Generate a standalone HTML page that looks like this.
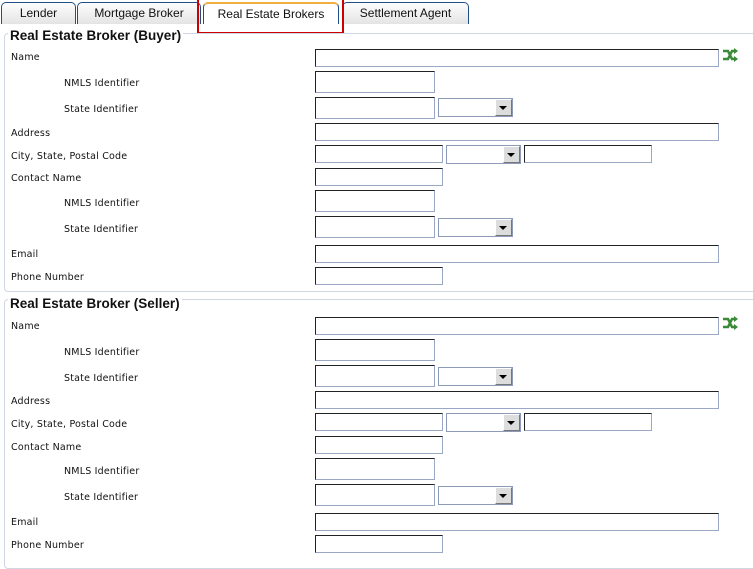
<!DOCTYPE html>
<html><head><meta charset="utf-8"><style>
body{margin:0;width:753px;height:553px;background:#fff;position:relative;overflow:hidden;font-family:"DejaVu Sans",sans-serif;}
.a{position:absolute}
.tab{position:absolute;top:2px;height:22px;background:linear-gradient(#fdfdfd,#e4e4e4);border:1px solid #1f4f86;border-bottom:none;border-radius:5px 5px 0 0;font:12px "Liberation Sans",sans-serif;color:#111;text-align:center;line-height:21px;box-sizing:border-box}
.fs{position:absolute;left:4px;width:760px;border:1px solid #d0d7e2;border-radius:4px;box-sizing:border-box}
.lg{position:absolute;left:8px;background:#fff;padding:0 2px;font:bold 13.5px "Liberation Sans",sans-serif;color:#111}
.l{position:absolute;font-size:9.5px;color:#111;letter-spacing:.2px;line-height:12px;margin-top:2px}
.i{position:absolute;box-sizing:border-box;border:1px solid #9aa8c6;border-top-color:#222;border-left-color:#222;background:#fff}
.s{position:absolute;box-sizing:border-box;border:1px solid #8e9bb8;background:#fff;height:19px;width:75px}
.s::after{content:"";position:absolute;right:0;top:0;width:17px;height:17px;background:#ddd;box-sizing:border-box;border:1px solid #777;border-top-color:#fff;border-left-color:#fff}
.s::before{content:"";position:absolute;right:5px;top:7px;border:4px solid transparent;border-top:4px solid #000;z-index:2}
</style></head><body>
<div class="tab" style="left:1px;width:75px">Lender</div>
<div class="tab" style="left:77px;width:124px">Mortgage Broker</div>
<div class="tab" style="left:203px;width:136px;background:#fff;border-top:2px solid #f0b040">Real Estate Brokers</div>
<div class="tab" style="left:342px;width:127px">Settlement Agent</div>
<div class="a" style="left:197px;top:0;width:147px;height:34px;border:2px solid #c00;border-top:none;box-sizing:border-box"></div>

<div class="fs" style="top:33px;height:259px"></div>
<div class="lg" style="top:28px">Real Estate Broker (Buyer)</div>
<div class="fs" style="top:299px;height:270px"></div>
<div class="lg" style="top:296px">Real Estate Broker (Seller)</div>

<div class="l" style="left:11px;top:50px">Name</div>
<div class="l" style="left:64px;top:76px">NMLS Identifier</div>
<div class="l" style="left:64px;top:102px">State Identifier</div>
<div class="l" style="left:11px;top:126px">Address</div>
<div class="l" style="left:11px;top:149px">City, State, Postal Code</div>
<div class="l" style="left:11px;top:171px">Contact Name</div>
<div class="l" style="left:64px;top:196px">NMLS Identifier</div>
<div class="l" style="left:64px;top:222px">State Identifier</div>
<div class="l" style="left:11px;top:247px">Email</div>
<div class="l" style="left:11px;top:270px">Phone Number</div>
<div class="i" style="left:315px;top:49px;width:404px;height:18px"></div>
<div class="i" style="left:315px;top:71px;width:120px;height:22px"></div>
<div class="i" style="left:315px;top:97px;width:120px;height:22px"></div>
<div class="s" style="left:438px;top:98px"></div>
<div class="i" style="left:315px;top:123px;width:404px;height:18px"></div>
<div class="i" style="left:315px;top:145px;width:128px;height:18px"></div>
<div class="s" style="left:446px;top:145px"></div>
<div class="i" style="left:524px;top:145px;width:128px;height:18px"></div>
<div class="i" style="left:315px;top:168px;width:128px;height:18px"></div>
<div class="i" style="left:315px;top:190px;width:120px;height:22px"></div>
<div class="i" style="left:315px;top:216px;width:120px;height:22px"></div>
<div class="s" style="left:438px;top:218px"></div>
<div class="i" style="left:315px;top:245px;width:404px;height:18px"></div>
<div class="i" style="left:315px;top:267px;width:128px;height:18px"></div>
<svg class="a" style="left:722px;top:48px" width="16" height="14" viewBox="0 0 16 14"><path d="M1 3h5l4 8h3M1 11h5l4-8h3" stroke="#3a8a3a" stroke-width="2.5" fill="none"/><path d="M12 0l4 3-4 3zM12 8l4 3-4 3z" fill="#3a8a3a"/></svg>

<div class="l" style="left:11px;top:319px">Name</div>
<div class="l" style="left:64px;top:345px">NMLS Identifier</div>
<div class="l" style="left:64px;top:371px">State Identifier</div>
<div class="l" style="left:11px;top:394px">Address</div>
<div class="l" style="left:11px;top:417px">City, State, Postal Code</div>
<div class="l" style="left:11px;top:440px">Contact Name</div>
<div class="l" style="left:64px;top:464px">NMLS Identifier</div>
<div class="l" style="left:64px;top:490px">State Identifier</div>
<div class="l" style="left:11px;top:515px">Email</div>
<div class="l" style="left:11px;top:538px">Phone Number</div>
<div class="i" style="left:315px;top:317px;width:404px;height:18px"></div>
<div class="i" style="left:315px;top:339px;width:120px;height:22px"></div>
<div class="i" style="left:315px;top:365px;width:120px;height:22px"></div>
<div class="s" style="left:438px;top:367px"></div>
<div class="i" style="left:315px;top:391px;width:404px;height:18px"></div>
<div class="i" style="left:315px;top:413px;width:128px;height:18px"></div>
<div class="s" style="left:446px;top:413px"></div>
<div class="i" style="left:524px;top:413px;width:128px;height:18px"></div>
<div class="i" style="left:315px;top:436px;width:128px;height:18px"></div>
<div class="i" style="left:315px;top:458px;width:120px;height:22px"></div>
<div class="i" style="left:315px;top:484px;width:120px;height:22px"></div>
<div class="s" style="left:438px;top:486px"></div>
<div class="i" style="left:315px;top:513px;width:404px;height:18px"></div>
<div class="i" style="left:315px;top:535px;width:128px;height:18px"></div>
<svg class="a" style="left:722px;top:316px" width="16" height="14" viewBox="0 0 16 14"><path d="M1 3h5l4 8h3M1 11h5l4-8h3" stroke="#3a8a3a" stroke-width="2.5" fill="none"/><path d="M12 0l4 3-4 3zM12 8l4 3-4 3z" fill="#3a8a3a"/></svg>
</body></html>
